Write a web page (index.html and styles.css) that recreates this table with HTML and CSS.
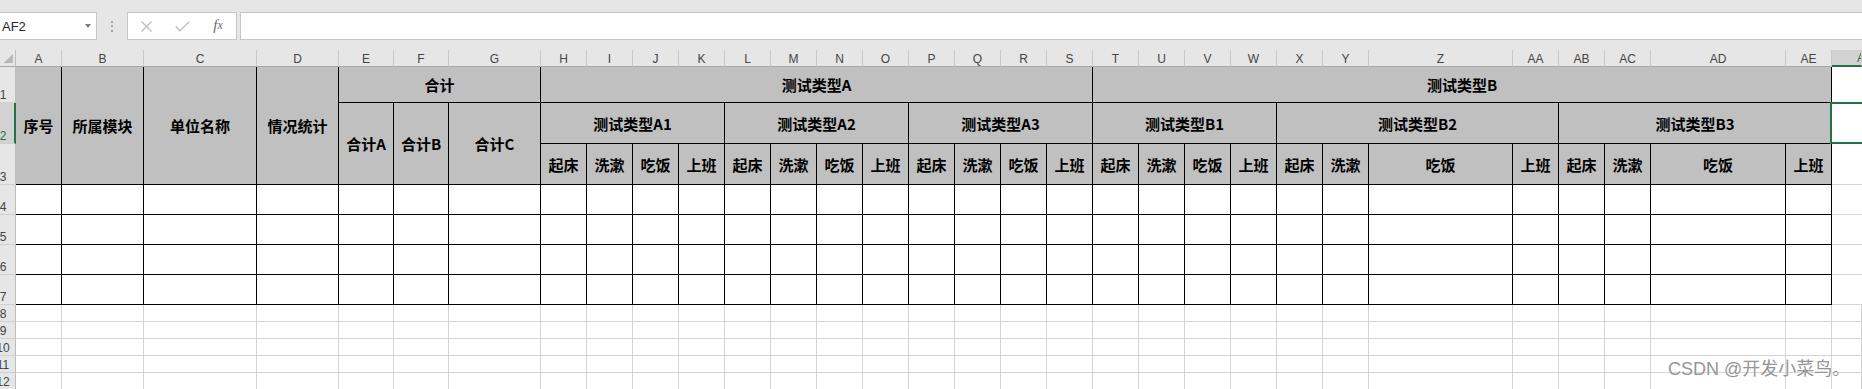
FILE: index.html
```html
<!DOCTYPE html>
<html lang="zh-CN">
<head>
<meta charset="utf-8">
<title>Excel</title>
<link rel="stylesheet" href="styles.css">
</head>
<body>
<div class="toolbar">
  <div class="namebox"><span class="ref">AF2</span><span class="caret"></span></div>
  <div class="grip"><i></i><i></i><i></i></div>
  <div class="fbtns">
    <span class="fbtn"><svg width="11" height="11" viewBox="0 0 11 11"><path d="M0.5 0.5L10.5 10.5M10.5 0.5L0.5 10.5" stroke="#bdbdbd" stroke-width="1.3" fill="none"/></svg></span>
    <span class="fbtn"><svg width="15" height="11" viewBox="0 0 15 11"><path d="M0.8 5.5L4.8 9.8L14.3 0.8" stroke="#c2c2c2" stroke-width="1.5" fill="none"/></svg></span>
    <span class="fbtn fx">f<span class="fxx">x</span></span>
  </div>
  <div class="fbar"></div>
</div>

<div class="sheet">
  <div class="corner"><svg width="15" height="16" viewBox="0 0 15 16"><polygon points="13,4 13,13 3.5,13" fill="#b9b9b9"/></svg></div>
  <div class="col">A</div><div class="col">B</div><div class="col">C</div><div class="col">D</div><div class="col">E</div><div class="col">F</div><div class="col">G</div><div class="col">H</div><div class="col">I</div><div class="col">J</div><div class="col">K</div><div class="col">L</div><div class="col">M</div><div class="col">N</div><div class="col">O</div><div class="col">P</div><div class="col">Q</div><div class="col">R</div><div class="col">S</div><div class="col">T</div><div class="col">U</div><div class="col">V</div><div class="col">W</div><div class="col">X</div><div class="col">Y</div><div class="col">Z</div><div class="col">AA</div><div class="col">AB</div><div class="col">AC</div><div class="col">AD</div><div class="col">AE</div><div class="col sel">AF</div>

  <div class="rh"><span>1</span></div>
  <div class="h r3">序号</div>
  <div class="h r3">所属模块</div>
  <div class="h r3">单位名称</div>
  <div class="h r3">情况统计</div>
  <div class="h c3">合计</div>
  <div class="h c12">测试类型A</div>
  <div class="h c12">测试类型B</div>
  <div class="af"></div>

  <div class="rh sel"><span>2</span></div>
  <div class="h r2">合计A</div>
  <div class="h r2">合计B</div>
  <div class="h r2">合计C</div>
  <div class="h c4">测试类型A1</div>
  <div class="h c4">测试类型A2</div>
  <div class="h c4">测试类型A3</div>
  <div class="h c4">测试类型B1</div>
  <div class="h c4">测试类型B2</div>
  <div class="h c4">测试类型B3</div>
  <div class="af cur"></div>

  <div class="rh"><span>3</span></div>
  <div class="h">起床</div><div class="h">洗漱</div><div class="h">吃饭</div><div class="h">上班</div>
  <div class="h">起床</div><div class="h">洗漱</div><div class="h">吃饭</div><div class="h">上班</div>
  <div class="h">起床</div><div class="h">洗漱</div><div class="h">吃饭</div><div class="h">上班</div>
  <div class="h">起床</div><div class="h">洗漱</div><div class="h">吃饭</div><div class="h">上班</div>
  <div class="h">起床</div><div class="h">洗漱</div><div class="h">吃饭</div><div class="h">上班</div>
  <div class="h">起床</div><div class="h">洗漱</div><div class="h">吃饭</div><div class="h">上班</div>
  <div class="af"></div>

  <div class="rh"><span>4</span></div>
  <div class="c"></div><div class="c"></div><div class="c"></div><div class="c"></div><div class="c"></div><div class="c"></div><div class="c"></div><div class="c"></div><div class="c"></div><div class="c"></div>
  <div class="c"></div><div class="c"></div><div class="c"></div><div class="c"></div><div class="c"></div><div class="c"></div><div class="c"></div><div class="c"></div><div class="c"></div><div class="c"></div>
  <div class="c"></div><div class="c"></div><div class="c"></div><div class="c"></div><div class="c"></div><div class="c"></div><div class="c"></div><div class="c"></div><div class="c"></div><div class="c"></div>
  <div class="c"></div>
  <div class="af"></div>

  <div class="rh"><span>5</span></div>
  <div class="c"></div><div class="c"></div><div class="c"></div><div class="c"></div><div class="c"></div><div class="c"></div><div class="c"></div><div class="c"></div><div class="c"></div><div class="c"></div>
  <div class="c"></div><div class="c"></div><div class="c"></div><div class="c"></div><div class="c"></div><div class="c"></div><div class="c"></div><div class="c"></div><div class="c"></div><div class="c"></div>
  <div class="c"></div><div class="c"></div><div class="c"></div><div class="c"></div><div class="c"></div><div class="c"></div><div class="c"></div><div class="c"></div><div class="c"></div><div class="c"></div>
  <div class="c"></div>
  <div class="af"></div>

  <div class="rh"><span>6</span></div>
  <div class="c"></div><div class="c"></div><div class="c"></div><div class="c"></div><div class="c"></div><div class="c"></div><div class="c"></div><div class="c"></div><div class="c"></div><div class="c"></div>
  <div class="c"></div><div class="c"></div><div class="c"></div><div class="c"></div><div class="c"></div><div class="c"></div><div class="c"></div><div class="c"></div><div class="c"></div><div class="c"></div>
  <div class="c"></div><div class="c"></div><div class="c"></div><div class="c"></div><div class="c"></div><div class="c"></div><div class="c"></div><div class="c"></div><div class="c"></div><div class="c"></div>
  <div class="c"></div>
  <div class="af"></div>

  <div class="rh"><span>7</span></div>
  <div class="c"></div><div class="c"></div><div class="c"></div><div class="c"></div><div class="c"></div><div class="c"></div><div class="c"></div><div class="c"></div><div class="c"></div><div class="c"></div>
  <div class="c"></div><div class="c"></div><div class="c"></div><div class="c"></div><div class="c"></div><div class="c"></div><div class="c"></div><div class="c"></div><div class="c"></div><div class="c"></div>
  <div class="c"></div><div class="c"></div><div class="c"></div><div class="c"></div><div class="c"></div><div class="c"></div><div class="c"></div><div class="c"></div><div class="c"></div><div class="c"></div>
  <div class="c"></div>
  <div class="af"></div>

  <div class="rh"><span>8</span></div>
  <div class="g"></div><div class="g"></div><div class="g"></div><div class="g"></div><div class="g"></div><div class="g"></div><div class="g"></div><div class="g"></div><div class="g"></div><div class="g"></div>
  <div class="g"></div><div class="g"></div><div class="g"></div><div class="g"></div><div class="g"></div><div class="g"></div><div class="g"></div><div class="g"></div><div class="g"></div><div class="g"></div>
  <div class="g"></div><div class="g"></div><div class="g"></div><div class="g"></div><div class="g"></div><div class="g"></div><div class="g"></div><div class="g"></div><div class="g"></div><div class="g"></div>
  <div class="g"></div><div class="g"></div>

  <div class="rh"><span>9</span></div>
  <div class="g"></div><div class="g"></div><div class="g"></div><div class="g"></div><div class="g"></div><div class="g"></div><div class="g"></div><div class="g"></div><div class="g"></div><div class="g"></div>
  <div class="g"></div><div class="g"></div><div class="g"></div><div class="g"></div><div class="g"></div><div class="g"></div><div class="g"></div><div class="g"></div><div class="g"></div><div class="g"></div>
  <div class="g"></div><div class="g"></div><div class="g"></div><div class="g"></div><div class="g"></div><div class="g"></div><div class="g"></div><div class="g"></div><div class="g"></div><div class="g"></div>
  <div class="g"></div><div class="g"></div>

  <div class="rh"><span>10</span></div>
  <div class="g"></div><div class="g"></div><div class="g"></div><div class="g"></div><div class="g"></div><div class="g"></div><div class="g"></div><div class="g"></div><div class="g"></div><div class="g"></div>
  <div class="g"></div><div class="g"></div><div class="g"></div><div class="g"></div><div class="g"></div><div class="g"></div><div class="g"></div><div class="g"></div><div class="g"></div><div class="g"></div>
  <div class="g"></div><div class="g"></div><div class="g"></div><div class="g"></div><div class="g"></div><div class="g"></div><div class="g"></div><div class="g"></div><div class="g"></div><div class="g"></div>
  <div class="g"></div><div class="g"></div>

  <div class="rh"><span>11</span></div>
  <div class="g"></div><div class="g"></div><div class="g"></div><div class="g"></div><div class="g"></div><div class="g"></div><div class="g"></div><div class="g"></div><div class="g"></div><div class="g"></div>
  <div class="g"></div><div class="g"></div><div class="g"></div><div class="g"></div><div class="g"></div><div class="g"></div><div class="g"></div><div class="g"></div><div class="g"></div><div class="g"></div>
  <div class="g"></div><div class="g"></div><div class="g"></div><div class="g"></div><div class="g"></div><div class="g"></div><div class="g"></div><div class="g"></div><div class="g"></div><div class="g"></div>
  <div class="g"></div><div class="g"></div>

  <div class="rh"><span>12</span></div>
  <div class="g"></div><div class="g"></div><div class="g"></div><div class="g"></div><div class="g"></div><div class="g"></div><div class="g"></div><div class="g"></div><div class="g"></div><div class="g"></div>
  <div class="g"></div><div class="g"></div><div class="g"></div><div class="g"></div><div class="g"></div><div class="g"></div><div class="g"></div><div class="g"></div><div class="g"></div><div class="g"></div>
  <div class="g"></div><div class="g"></div><div class="g"></div><div class="g"></div><div class="g"></div><div class="g"></div><div class="g"></div><div class="g"></div><div class="g"></div><div class="g"></div>
  <div class="g"></div><div class="g"></div>
</div>

<div class="watermark">CSDN @开发小菜鸟。</div>
</body>
</html>
```

FILE: styles.css
```css
* {
  box-sizing: border-box;
  margin: 0;
  padding: 0;
}

html,
body {
  width: 1862px;
  height: 389px;
  overflow: hidden;
  background: #ffffff;
}

body {
  font-family: "Liberation Sans", "Noto Sans CJK SC", sans-serif;
  color: #222;
}

/* ---------- formula toolbar ---------- */
.toolbar {
  height: 50px;
  background: #e6e6e6;
  display: flex;
  align-items: flex-start;
  padding-top: 12px;
  overflow: hidden;
}

.namebox {
  flex: 0 0 97px;
  height: 28px;
  background: #ffffff;
  border: 1px solid #c6c6c6;
  border-left: 0;
  display: flex;
  align-items: center;
  justify-content: space-between;
  padding: 0 5px 0 2px;
  font-size: 13px;
  color: #262626;
}

.caret {
  width: 0;
  height: 0;
  border-left: 3.5px solid transparent;
  border-right: 3.5px solid transparent;
  border-top: 4px solid #7a7a7a;
}

.grip {
  flex: 0 0 30px;
  height: 28px;
  display: flex;
  flex-direction: column;
  align-items: center;
  justify-content: center;
  gap: 2.5px;
}

.grip i {
  display: block;
  width: 2px;
  height: 2px;
  background: #a3a3a3;
}

.fbtns {
  flex: 0 0 110px;
  height: 28px;
  background: #ffffff;
  border: 1px solid #c6c6c6;
  display: flex;
}

.fbtn {
  width: 36px;
  display: flex;
  align-items: center;
  justify-content: center;
}

.fx {
  font-family: "Liberation Serif", serif;
  font-style: italic;
  font-size: 15px;
  color: #6a6a6a;
  padding-bottom: 2px;
}

.fxx {
  font-size: 12px;
}

.fbar {
  flex: 1 1 auto;
  margin-left: 3px;
  margin-right: -3px;
  height: 28px;
  background: #ffffff;
  border: 1px solid #c6c6c6;
}

/* ---------- sheet grid ---------- */
.sheet {
  display: grid;
  grid-template-columns: 16px 46px 82px 113px 82px 55px 55px 92px repeat(18, 46px) 144px 46px 46px 46px 135px 46px 30px;
  grid-template-rows: 17px 36px 41px 41px repeat(4, 30px) repeat(5, 17px);
}

.corner {
  background: #e6e6e6;
  border-right: 1px solid #bdbdbd;
  border-bottom: 1px solid #a6a6a6;
}

.corner svg {
  display: block;
}

.col {
  background: #e6e6e6;
  border-right: 1px solid #c8c8c8;
  border-bottom: 1px solid #a6a6a6;
  display: flex;
  align-items: flex-end;
  justify-content: center;
  font-size: 12px;
  line-height: 13px;
  color: #444;
  white-space: nowrap;
  overflow: hidden;
}

.col.sel {
  background: #d2d2d2;
  color: #217346;
  border-bottom: 2px solid #217346;
  justify-content: flex-start;
  padding-left: 25px;
}

.rh {
  background: #e6e6e6;
  border-right: 1px solid #bdbdbd;
  border-bottom: 1px solid #d0d0d0;
  display: flex;
  align-items: flex-end;
  overflow: hidden;
  font-size: 12px;
  line-height: 13px;
  color: #444;
}

.rh span {
  flex: 0 0 6px;
  min-width: 0;
  display: flex;
  justify-content: center;
  white-space: nowrap;
}

.rh.sel {
  background: #d2d2d2;
  color: #217346;
  border-right: 2px solid #217346;
}

.h {
  background: #c0c0c0;
  border-right: 1px solid #000;
  border-bottom: 1px solid #000;
  display: flex;
  align-items: center;
  justify-content: center;
  font-family: "Noto Sans CJK SC", sans-serif;
  font-weight: 700;
  font-size: 15px;
  color: #000;
  white-space: nowrap;
}

.r3 { grid-row: span 3; }
.r2 { grid-row: span 2; }
.c3 { grid-column: span 3; }
.c4 { grid-column: span 4; }
.c12 { grid-column: span 12; }

.c {
  border-right: 1px solid #000;
  border-bottom: 1px solid #000;
}

.af {
  border-bottom: 1px solid #d4d4d4;
}

.af.cur {
  position: relative;
}

.af.cur::after {
  content: "";
  position: absolute;
  left: -2px;
  top: -1px;
  bottom: -1px;
  right: -6px;
  border: 2px solid #217346;
}

.g {
  border-right: 1px solid #d4d4d4;
  border-bottom: 1px solid #d4d4d4;
}

/* ---------- watermark ---------- */
.watermark {
  position: absolute;
  left: 1668px;
  top: 360px;
  font-family: "Liberation Sans", "Noto Sans CJK SC", sans-serif;
  font-size: 18px;
  line-height: 18px;
  color: #959595;
  text-shadow: 0 0 2px #ffffff;
  white-space: nowrap;
}
```
